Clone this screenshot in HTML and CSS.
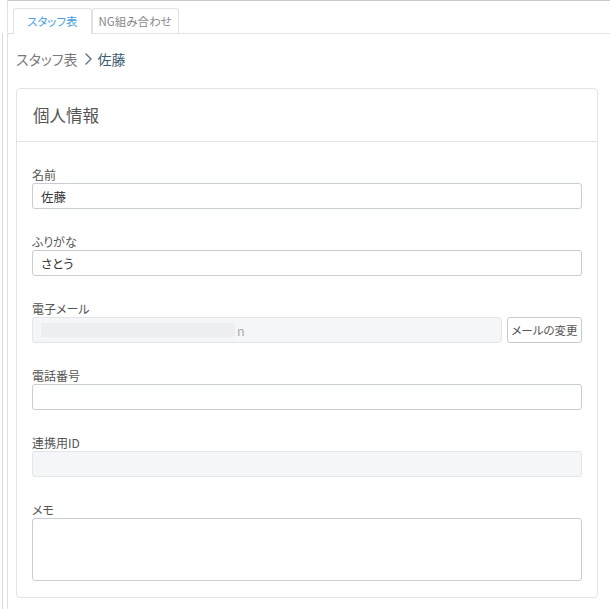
FILE: index.html
```html
<!DOCTYPE html>
<html lang="ja">
<head>
  <meta charset="UTF-8">
  <meta name="viewport" content="width=device-width, initial-scale=1.0">
  <link rel="stylesheet" href="styles.css">
  <title>スタッフ表</title>
</head>
<body>
  <div class="layout">
    <div class="rail"></div>
    <div class="main">
      <nav class="tabs">
        <a class="tab active" href="javascript:void(0);">スタッフ表</a>
        <a class="tab" href="javascript:void(0);">NG組み合わせ</a>
      </nav>
      <div class="content">
        <div class="breadcrumb">
          <span class="crumb">スタッフ表</span>
          <svg class="chevron" width="10" height="14" viewBox="0 0 10 14"><path d="M2.5 1.5 L8 7 L2.5 12.5" fill="none" stroke="#5b7384" stroke-width="1.4"/></svg>
          <span class="crumb current">佐藤</span>
        </div>
        <div class="card">
          <div class="card-header">個人情報</div>
          <div class="card-body">
            <div class="field">
              <label>名前</label>
              <input type="text" value="佐藤">
            </div>
            <div class="field">
              <label>ふりがな</label>
              <input type="text" value="さとう">
            </div>
            <div class="field">
              <label>電子メール</label>
              <div class="row">
                <div class="input readonly"><span class="redacted"></span><span class="tail">n</span></div>
                <button>メールの変更</button>
              </div>
            </div>
            <div class="field">
              <label>電話番号</label>
              <input type="text">
            </div>
            <div class="field">
              <label>連携用ID</label>
              <input type="text" class="readonly" readonly>
            </div>
            <div class="field">
              <label>メモ</label>
              <textarea></textarea>
            </div>
          </div>
        </div>
      </div>
    </div>
  </div>
</body>
</html>
```

FILE: styles.css
```css
html, body {
  margin: 0;
  padding: 0;
  background: #fff;
}

body {
  font-family: "Noto Sans CJK JP", "Noto Sans", sans-serif;
  font-feature-settings: "palt";
  color: #444;
  font-size: 12px;
}

.layout {
  display: flex;
  flex-direction: row;
  min-height: 609px;
}

.rail {
  width: 2px;
  margin-top: 33px;
  border-right: 1px solid #dcdcdc;
}

.main {
  flex-grow: 1;
  margin-left: 4px;
  border-left: 1px solid #e2e2e2;
  border-top: 1px solid #c9c9c9;
}

.tabs {
  display: flex;
  flex-direction: row;
  padding: 7px 0 0 5px;
  border-bottom: 1px solid #e2e2e2;
}

.tab {
  display: block;
  height: 24px;
  line-height: 24px;
  padding: 0 6px;
  font-size: 11.5px;
  text-decoration: none;
  color: #888;
  border: 1px solid #e2e2e2;
  border-bottom: none;
  border-radius: 3px 3px 0 0;
  margin-bottom: -1px;
  background: #fff;
}

.tab.active {
  color: #4a9fe3;
  padding: 0 13px;
  height: 25px;
}

.content {
  padding: 0 12px 0 8px;
}

.breadcrumb {
  display: flex;
  flex-direction: row;
  align-items: center;
  column-gap: 5px;
  height: 20px;
  margin: 15px 0 19px;
  font-size: 14px;
}

.crumb {
  color: #7a7a7a;
}

.crumb.current {
  color: #3e5c72;
}

.card {
  border: 1px solid #e3e3e3;
  border-radius: 4px;
}

.card-header {
  height: 52px;
  line-height: 52px;
  padding-left: 16px;
  font-size: 16.5px;
  color: #555;
  border-bottom: 1px solid #e3e3e3;
}

.card-body {
  padding: 25px 15px 16px;
  display: flex;
  flex-direction: column;
  row-gap: 25px;
}

.field {
  display: flex;
  flex-direction: column;
}

.field label {
  line-height: 16px;
  font-size: 12px;
  color: #555;
}

input, textarea, .input {
  box-sizing: border-box;
  height: 26px;
  padding: 0 8px;
  font-family: "Noto Sans CJK JP", "Noto Sans", sans-serif;
  font-feature-settings: "palt";
  font-size: 12.5px;
  color: #333;
  border: 1px solid #c8cdd5;
  border-radius: 3px;
  background: #fff;
  outline: none;
}

textarea {
  height: 63px;
  resize: none;
}

.readonly {
  background: #f5f6f8;
  border-color: #e2e5ea;
}

.row {
  display: flex;
  flex-direction: row;
  column-gap: 5px;
}

.input {
  flex-grow: 1;
  display: flex;
  align-items: center;
}

.redacted {
  width: 194px;
  height: 14px;
  background: #eceef1;
  margin-right: 2px;
}

.tail {
  color: #aaa;
}

button {
  height: 26px;
  width: 75px;
  padding: 0;
  font-family: "Noto Sans CJK JP", "Noto Sans", sans-serif;
  font-feature-settings: "palt";
  font-size: 11.5px;
  color: #555;
  background: #fff;
  border: 1px solid #c5c9d0;
  border-radius: 3px;
}
```
